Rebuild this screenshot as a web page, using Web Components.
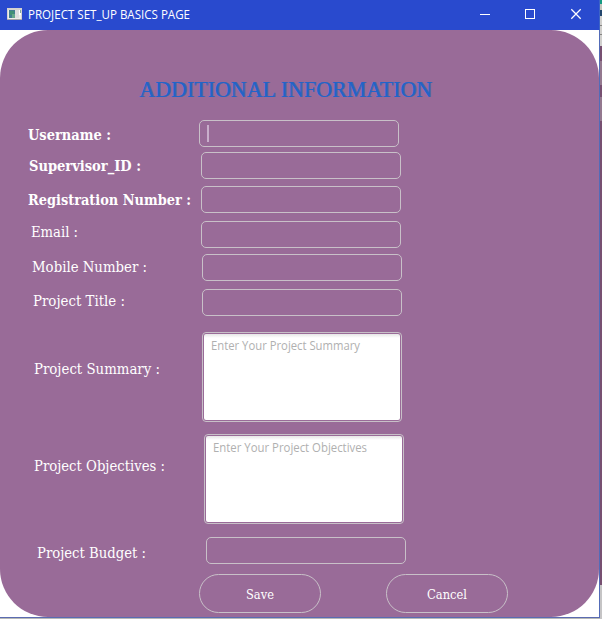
<!DOCTYPE html>
<html lang="en">
<head>
<meta charset="utf-8">
<title>PROJECT SET_UP BASICS PAGE</title>
<style>
body { margin: 0; width: 602px; height: 619px; overflow: hidden; background: #fff; }
</style>
</head>
<body>
<app-window></app-window>
<script>
// Single line of text laid out to an exact width on a given baseline.
class FitText extends HTMLElement {
  connectedCallback() {
    const w = this.getAttribute('w'), base = this.getAttribute('base');
    this.attachShadow({ mode: 'open' }).innerHTML = `
      <style>:host{display:block;width:${w}px;height:20px;flex:none}svg{display:block;overflow:visible}</style>
      <svg width="${w}" height="20"><text x="0" y="${base}" textLength="${w}" lengthAdjust="spacingAndGlyphs" fill="currentColor"></text></svg>`;
    this.shadowRoot.querySelector('text').textContent = this.getAttribute('text');
  }
}
customElements.define('fit-text', FitText);

class TitleBar extends HTMLElement {
  connectedCallback() {
    this.attachShadow({ mode: 'open' }).innerHTML = `
      <style>
        :host{display:flex;height:30px;background:#294ace;color:#fff;font:12px "Open Sans","Noto Sans",sans-serif}
        .icon{margin:8px 6px 0 7px;flex:none}
        .controls{margin-left:auto;flex:none}
      </style>
      <svg class="icon" width="15" height="12" shape-rendering="crispEdges">
        <rect width="15" height="12" fill="#d4d3d0"/><rect y="11" width="15" height="1" fill="#a8a6a8"/>
        <rect x="1" y="2" width="13" height="9" fill="#eeeeeb"/>
        <rect x="2" y="2" width="6" height="8" fill="#447f91"/><rect x="3" y="3" width="4" height="4" fill="#419176"/><rect x="5" y="6" width="3" height="4" fill="#67a98b"/>
        <rect x="8" y="2" width="4" height="8" fill="#dedfdf"/><rect x="12" y="2" width="2" height="5" fill="#fff"/><rect x="13" y="2" width="1" height="3" fill="#84a899"/>
      </svg>
      <fit-text w="162" base="19" text="PROJECT SET_UP BASICS PAGE"></fit-text>
      <svg class="controls" width="137" height="30" fill="none" stroke="#fff">
        <path d="M18 14.5h10M63.500 9.500h9v9h-9z" shape-rendering="crispEdges"/>
        <path d="M109.300 9.300l9.400 9.400M118.700 9.300l-9.400 9.400" stroke-width="1.250"/>
      </svg>`;
  }
}
customElements.define('title-bar', TitleBar);

class TextField extends HTMLElement {
  connectedCallback() {
    this.attachShadow({ mode: 'open' }).innerHTML = `
      <style>
        :host{display:block;box-sizing:border-box;width:200px;height:27px;border:1px solid #c8c0c8;border-radius:5px;flex:none}
        .caret{width:2px;height:17px;margin:4px 0 0 7px;background:#c9aecb}
      </style>${this.hasAttribute('focused') ? '<div class="caret"></div>' : ''}`;
  }
}
customElements.define('text-field', TextField);

class TextArea extends HTMLElement {
  connectedCallback() {
    this.attachShadow({ mode: 'open' }).innerHTML = `
      <style>
        :host{display:block;box-sizing:border-box;width:200px;height:90px;border:1px solid #c8c0c8;border-radius:4px;padding:1px;flex:none}
        .inner{box-sizing:border-box;height:86px;border-radius:2px;padding-left:7px;background:linear-gradient(#e6e6e6,#fff 4px);color:#b0b0b0;font:12px "Open Sans","Noto Sans",sans-serif}
      </style>
      <div class="inner"><fit-text w="${this.getAttribute('w')}" base="16" text="${this.getAttribute('placeholder')}"></fit-text></div>`;
  }
}
customElements.define('text-area', TextArea);

class FormRow extends HTMLElement {
  connectedCallback() {
    const a = n => this.getAttribute(n);
    this.attachShadow({ mode: 'open' }).innerHTML = `
      <style>
        :host{display:grid;grid-template-columns:${a('field-x')}px 200px;margin-top:${a('gap')}px;color:#fff;
          font:${this.hasAttribute('required') ? 'bold' : 'normal'} 14.2px "DejaVu Serif Condensed","DejaVu Serif",serif}
        fit-text{margin-left:${a('label-x')}px}
      </style>
      <fit-text w="${a('w')}" base="${a('base')}" text="${a('label')}"></fit-text><slot></slot>`;
  }
}
customElements.define('form-row', FormRow);

class PillButton extends HTMLElement {
  connectedCallback() {
    this.attachShadow({ mode: 'open' }).innerHTML = `
      <style>
        :host{display:flex;justify-content:center;box-sizing:border-box;width:122px;height:39px;border:1px solid #c8c0c8;border-radius:20px;color:#fff;font:13.5px "DejaVu Serif Condensed","DejaVu Serif",serif}
      </style><fit-text w="${this.getAttribute('w')}" base="24" text="${this.getAttribute('label')}"></fit-text>`;
  }
}
customElements.define('pill-button', PillButton);

class AppWindow extends HTMLElement {
  connectedCallback() {
    this.attachShadow({ mode: 'open' }).innerHTML = `
      <style>
        :host{display:grid;grid-template-columns:600px 2px;height:619px;overflow:hidden}
        .frame{box-sizing:border-box;height:619px;background:#fff}
        .body{box-sizing:border-box;height:588px;border-right:1px solid #526bb8;border-bottom:1px solid #5b6bb1}
        title-bar{width:599px;border-right:1px solid #3d64c5}
        .panel{box-sizing:border-box;width:599px;height:587px;padding-top:47px;border-radius:48px;background:#996b98}
        .heading{margin-left:139px;height:43px;color:#2264c8;font:24px "Liberation Serif",serif;text-shadow:1px 0 #4a66b8}
        .actions{display:flex;gap:65px;margin:10px 0 0 199px}
        .under{height:1px;background:#b5b8b7}
        .edge{background:linear-gradient(#159a83 0 4px,#c4c4bc 4px 10px,#23466d 10px 16px,#d0cfcd 16px 25px,#858482 25px 26px,#d0cfcd 26px 34px,#858482 34px 35px,#d0cfcd 35px 46px,#775071 46px 61px,#94798f 61px 85px,#775071 85px 97px,#94798f 97px 121px,#775071 121px 585px,#c5c4c5 585px)}
      </style>
      <div class="frame">
        <title-bar></title-bar>
        <div class="body"><main class="panel">
          <div class="heading"><fit-text w="293" base="20" text="ADDITIONAL INFORMATION"></fit-text></div>
          <form-row required label="Username :" label-x="28" w="83" base="20" field-x="199" gap="0"><text-field focused></text-field></form-row>
          <form-row required label="Supervisor_ID :" label-x="29" w="112" base="19" field-x="201" gap="5"><text-field></text-field></form-row>
          <form-row required label="Registration Number :" label-x="28" w="163" base="19" field-x="201" gap="7"><text-field></text-field></form-row>
          <form-row label="Email :" label-x="31" w="47" base="16" field-x="201" gap="8"><text-field></text-field></form-row>
          <form-row label="Mobile Number :" label-x="32" w="115" base="18" field-x="202" gap="6"><text-field></text-field></form-row>
          <form-row label="Project Title :" label-x="33" w="92" base="17" field-x="202" gap="8"><text-field></text-field></form-row>
          <form-row label="Project Summary :" label-x="34" w="126" base="42" field-x="202" gap="16"><text-area placeholder="Enter Your Project Summary" w="149"></text-area></form-row>
          <form-row label="Project Objectives :" label-x="34" w="131" base="37" field-x="204" gap="12"><text-area placeholder="Enter Your Project Objectives" w="154"></text-area></form-row>
          <form-row label="Project Budget :" label-x="37" w="109" base="21" field-x="206" gap="13"><text-field></text-field></form-row>
          <div class="actions"><pill-button label="Save" w="28"></pill-button><pill-button label="Cancel" w="40"></pill-button></div>
        </main></div>
        <div class="under"></div>
      </div>
      <div class="edge"></div>`;
  }
}
customElements.define('app-window', AppWindow);
</script>
</body>
</html>
